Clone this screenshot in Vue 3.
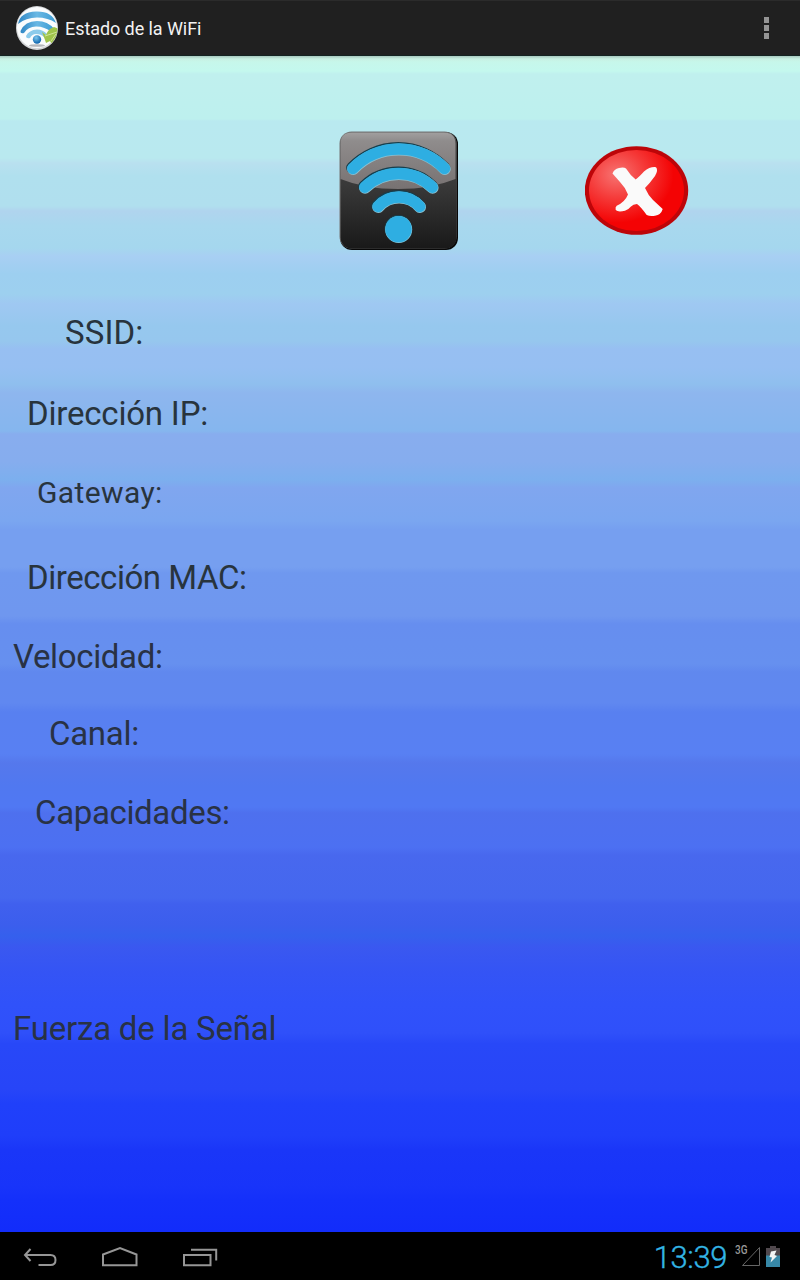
<script setup>
const fields = [
  { key: 'ssid', label: 'SSID:' },
  { key: 'ip', label: 'Dirección IP:' },
  { key: 'gateway', label: 'Gateway:' },
  { key: 'mac', label: 'Dirección MAC:' },
  { key: 'speed', label: 'Velocidad:' },
  { key: 'channel', label: 'Canal:' },
  { key: 'caps', label: 'Capacidades:' },
  { key: 'signal', label: 'Fuerza de la Señal' }
]

const waves = 'M13.8 37.500A63.6 63.6 0 0 1 105.500 37.500M25.800 56.200A48.300 48.300 0 0 1 93.300 56.200M39 75.500A27.600 27.600 0 0 1 80.700 75.500'
</script>

<template>
  <div class="screen">
    <header class="action-bar">
      <svg class="app-icon" viewBox="0 0 44 46">
        <defs>
          <linearGradient id="arc" x1="0" y1="0" x2="1" y2="0">
            <stop offset="0" stop-color="#2f86c4" />
            <stop offset="0.5" stop-color="#69b8e4" />
            <stop offset="1" stop-color="#3b9bd3" />
          </linearGradient>
          <radialGradient id="ball" cx="0.4" cy="0.3" r="0.7">
            <stop offset="0" stop-color="#7cc8ee" />
            <stop offset="1" stop-color="#0b62ac" />
          </radialGradient>
          <clipPath id="disc"><ellipse cx="22" cy="23" rx="20.5" ry="21.5" /></clipPath>
        </defs>
        <ellipse cx="22" cy="23" rx="21" ry="22" fill="#d3d5d7" />
        <ellipse cx="22" cy="22.5" rx="20" ry="20.5" fill="#fafcfd" />
        <g clip-path="url(#disc)">
          <path d="M3 19Q5 7 21 6.500Q37 6 41 18Q33 12.500 22 12.500Q11 12.500 3 19Z" fill="url(#arc)" />
          <path d="M5.500 26Q10 16 22 16Q33 16 39 24L36 27Q30 21.500 21 21.500Q13 21.500 9 28Q5 29 5.500 26Z" fill="url(#arc)" />
          <path d="M11 31Q14 25 22 24.500Q28 24.500 32 29L29 32Q26 29 21 29Q17 29 15 33Q11 34 11 31Z" fill="#8ccbeb" />
          <path d="M27 27L31 30Q33 24 39 22L44 24L43 40Q37 40 35 36L31 38L30 35Z" fill="#9fc44a" />
          <path d="M30 31L42 27M36 36L41 29" stroke="#d5e69f" stroke-width="0.9" />
          <ellipse cx="22" cy="40.5" rx="8" ry="1.3" fill="#b5b7bb" />
        </g>
        <circle cx="22" cy="34.5" r="4.2" fill="url(#ball)" />
      </svg>
      <h1 class="title">Estado de la WiFi</h1>
      <div class="overflow"><i></i><i></i><i></i></div>
    </header>

    <main class="content">
      <div class="icons">
        <svg class="wifi" viewBox="0 0 120 120">
          <defs>
            <linearGradient id="tile" x1="0" y1="0" x2="0" y2="1">
              <stop offset="0" stop-color="#4b4b4b" />
              <stop offset="0.45" stop-color="#393939" />
              <stop offset="1" stop-color="#191919" />
            </linearGradient>
            <linearGradient id="gloss" x1="0" y1="0" x2="0" y2="1">
              <stop offset="0" stop-color="#a19f9f" />
              <stop offset="0.15" stop-color="#8f8c8c" />
              <stop offset="1" stop-color="#777272" />
            </linearGradient>
          </defs>
          <rect x="1" y="1" width="118" height="118" rx="12" fill="#080808" />
          <rect x="0.5" y="0.5" width="117" height="117" rx="12" fill="#777" />
          <rect x="1.5" y="1.5" width="116" height="116" rx="11" fill="url(#tile)" />
          <path d="M1.5 48V13Q1.5 1.500 13 1.500H105Q116.500 1.500 116.500 13V48Q92 58 59 58Q26 58 1.500 48Z" fill="url(#gloss)" />
          <path :d="waves" class="arc arc-shade" />
          <path :d="waves" class="arc arc-light" />
          <path :d="waves" class="arc" />
          <circle cx="59.300" cy="97.700" r="13.700" fill="#164453" />
          <circle cx="59.700" cy="98.500" r="13.500" fill="#83c8dd" />
          <circle cx="59.500" cy="98.100" r="13.200" fill="#2eaee2" />
        </svg>
        <svg class="status" viewBox="0 0 104 90">
          <defs>
            <radialGradient id="red" cx="0.29" cy="0.3" r="0.6">
              <stop offset="0" stop-color="#f77472" />
              <stop offset="0.5" stop-color="#f53a39" />
              <stop offset="1" stop-color="#f40304" />
            </radialGradient>
          </defs>
          <ellipse cx="51.500" cy="44.500" rx="51.700" ry="44.300" fill="#bd0509" />
          <ellipse cx="51.500" cy="44.500" rx="47.500" ry="40.500" fill="url(#red)" />
          <path d="M27.500 27.500Q29 23 34 22Q39 21 41 22.500Q45 29 50.700 33.500Q54 31 59 25.500Q65 20.500 71 21.200Q73.500 24 70 30Q65 37 60 42Q63 49 68 54L77.700 63Q76 69 70 69.700Q65 70.500 61.700 69Q56 61 52 58Q48 58 46 60.500Q43 64 40 64.700Q33 66.500 30.700 64Q30 61 31.700 59.700Q40 56 43 48.500Q40 41 35 36Z" fill="#fafafa" />
        </svg>
      </div>

      <ul class="fields">
        <li v-for="f in fields" :key="f.key" :class="f.key">{{ f.label }}</li>
      </ul>
    </main>

    <footer class="nav-bar">
      <svg class="nav-icons" viewBox="0 0 240 48">
        <path d="M30.500 17L25 23L30.500 29M25 23H50.500Q55.500 23 55.500 28Q55.500 33 50.500 33H38.500" />
        <path d="M103 33.200V22.500L120 16L136.500 22.500V33.200Z" />
        <path d="M184 23H210.500V33.200H184ZM191 17.700H216.200V28.500" />
      </svg>
      <div class="tray">
        <span class="clock">13:39</span>
        <svg class="signal-icon" viewBox="0 0 28 26">
          <text x="0" y="11" textLength="12.5" lengthAdjust="spacingAndGlyphs">3G</text>
          <path d="M7.500 22.500H24.500V4.500Z" />
        </svg>
        <svg class="battery" viewBox="0 0 14 22">
          <path d="M4 1H10V3H14V11H0V3H4Z" fill="#50484d" />
          <path d="M0 10.500H14V22H0Z" fill="#3788a7" />
          <path d="M5 6.500L10.500 5.500L8.500 10L11 11L4.500 17.500L6 12.500L3.500 12Z" fill="#f2f4f4" />
        </svg>
      </div>
    </footer>
  </div>
</template>

<style>
body {
  margin: 0;
  background: #000;
}
</style>

<style scoped>
.screen {
  width: 800px;
  height: 1280px;
  display: flex;
  flex-direction: column;
  overflow: hidden;
  font-family: Roboto, sans-serif;
}
.action-bar {
  height: 56px;
  box-sizing: border-box;
  flex-shrink: 0;
  display: flex;
  align-items: center;
  padding: 0 31px 0 15px;
  background: #202020;
  border-top: 1px solid #2b2b2b;
  border-bottom: 1px solid #142321;
}
.app-icon {
  width: 44px;
  height: 46px;
}
.title {
  margin: 1px 0 0 6px;
  flex: 1;
  font-size: 18px;
  font-weight: 400;
  letter-spacing: -0.07px;
  color: #f2f2f2;
}
.overflow {
  display: flex;
  flex-direction: column;
  gap: 2px;
}
.overflow i {
  width: 5px;
  height: 6px;
  background: #949494;
}
.content {
  height: 1176px;
  background:
    linear-gradient(#a7c9bf 0, #c8eee0aa 3px, transparent 6px),
    linear-gradient(
      #c8f6e8 0, #c4f8ee 15px, #c0f0ee 18px, #bdf0ee 63px, #b9e9f0 65px,
      #b9e9ef 102px, #b9e0ef 107px, #b0e0ee 120px, #b0dfee 150px, #b0d4ee 155px,
      #a8d8ee 170px, #a5d7ee 192px, #a8cff3 200px, #9dcff0 218px, #9dd0ef 238px,
      #9fc8f2 248px, #96c8ee 270px, #96c7ee 285px, #97bff2 293px, #96bff2 312px,
      #8fbfee 328px, #8eb6ee 337px, #85b6ee 375px, #88adee 378px, #86adee 405px,
      #7cafee 424px, #80a6ef 432px, #7aa6f0 465px, #769ff0 474px, #769ff0 511px,
      #6f98ef 517px, #6f97ef 560px, #668eef 568px, #6690ef 608px, #6088ee 616px,
      #6088f0 647px, #5880f0 656px, #5880f3 698px, #5578ec 707px, #5078f0 730px,
      #5078f3 751px, #4e70ee 757px, #4c70f2 791px, #4868ee 799px, #4467ef 842px,
      #4060ee 848px, #3b5eed 870px, #3560ed 880px, #3a58f0 891px, #3454f5 917px,
      #3052fa 948px, #2f50fa 977px, #2848f8 988px, #2745f8 1034px, #2040fa 1048px,
      #1f3efa 1080px, #1a36f8 1094px, #1834fa 1130px, #1430fa 1144px, #122cfa 1176px
    );
}
.icons {
  height: 258px;
  box-sizing: border-box;
  display: flex;
  align-items: flex-start;
  padding: 75px 0 0 339px;
}
.wifi {
  width: 120px;
  height: 120px;
}
.arc {
  fill: none;
  stroke: #2eaee2;
  stroke-width: 11.4;
  stroke-linecap: round;
}
.arc-shade {
  stroke: #163e4c;
  stroke-width: 12.4;
  transform: translate(-0.4px, -0.7px);
}
.arc-light {
  stroke: #8bc2d3;
  stroke-width: 12;
  transform: translate(0.3px, 0.5px);
}
.status {
  width: 104px;
  height: 90px;
  margin: 15px 0 0 126px;
}
.fields {
  margin: 0;
  padding: 0 0 0 1px;
  list-style: none;
  display: grid;
  grid-template-rows: 81px 78px 86px 79px 77px 79px 216px 40px;
  font-size: 33px;
  line-height: 38px;
  letter-spacing: -0.35px;
  color: #28343d;
}
.ssid {
  padding-left: 64px;
  letter-spacing: 0.1px;
}
.ip {
  padding-left: 26px;
  letter-spacing: -0.2px;
}
.mac {
  padding-left: 26px;
  letter-spacing: -0.45px;
}
.gateway {
  padding: 1px 0 0 36px;
  font-size: 30px;
  letter-spacing: 0.4px;
}
.speed {
  padding-left: 12px;
}
.channel {
  padding-left: 48px;
  letter-spacing: -0.3px;
}
.caps {
  padding-left: 34px;
}
.signal {
  padding-left: 12px;
  letter-spacing: -0.2px;
}
.speed,
.channel,
.caps,
.signal {
  color: #293244;
}
.nav-bar {
  height: 48px;
  display: flex;
  justify-content: space-between;
  background: #000;
}
.nav-icons {
  width: 240px;
  height: 48px;
  fill: none;
  stroke: #969696;
  stroke-width: 2;
}
.tray {
  display: flex;
  align-items: center;
  padding-right: 20px;
}
.clock {
  margin: 3px 8px 0 0;
  font-size: 31px;
  font-weight: 300;
  line-height: 36px;
  letter-spacing: -0.4px;
  color: #33b5e5;
  -webkit-text-stroke: 0.4px #33b5e5;
}
.signal-icon {
  width: 28px;
  height: 26px;
  margin-right: 3px;
}
.signal-icon text {
  font-size: 12px;
  font-weight: 500;
  fill: #999;
}
.signal-icon path {
  fill: none;
  stroke: #666;
}
.battery {
  width: 14px;
  height: 22px;
}
</style>
